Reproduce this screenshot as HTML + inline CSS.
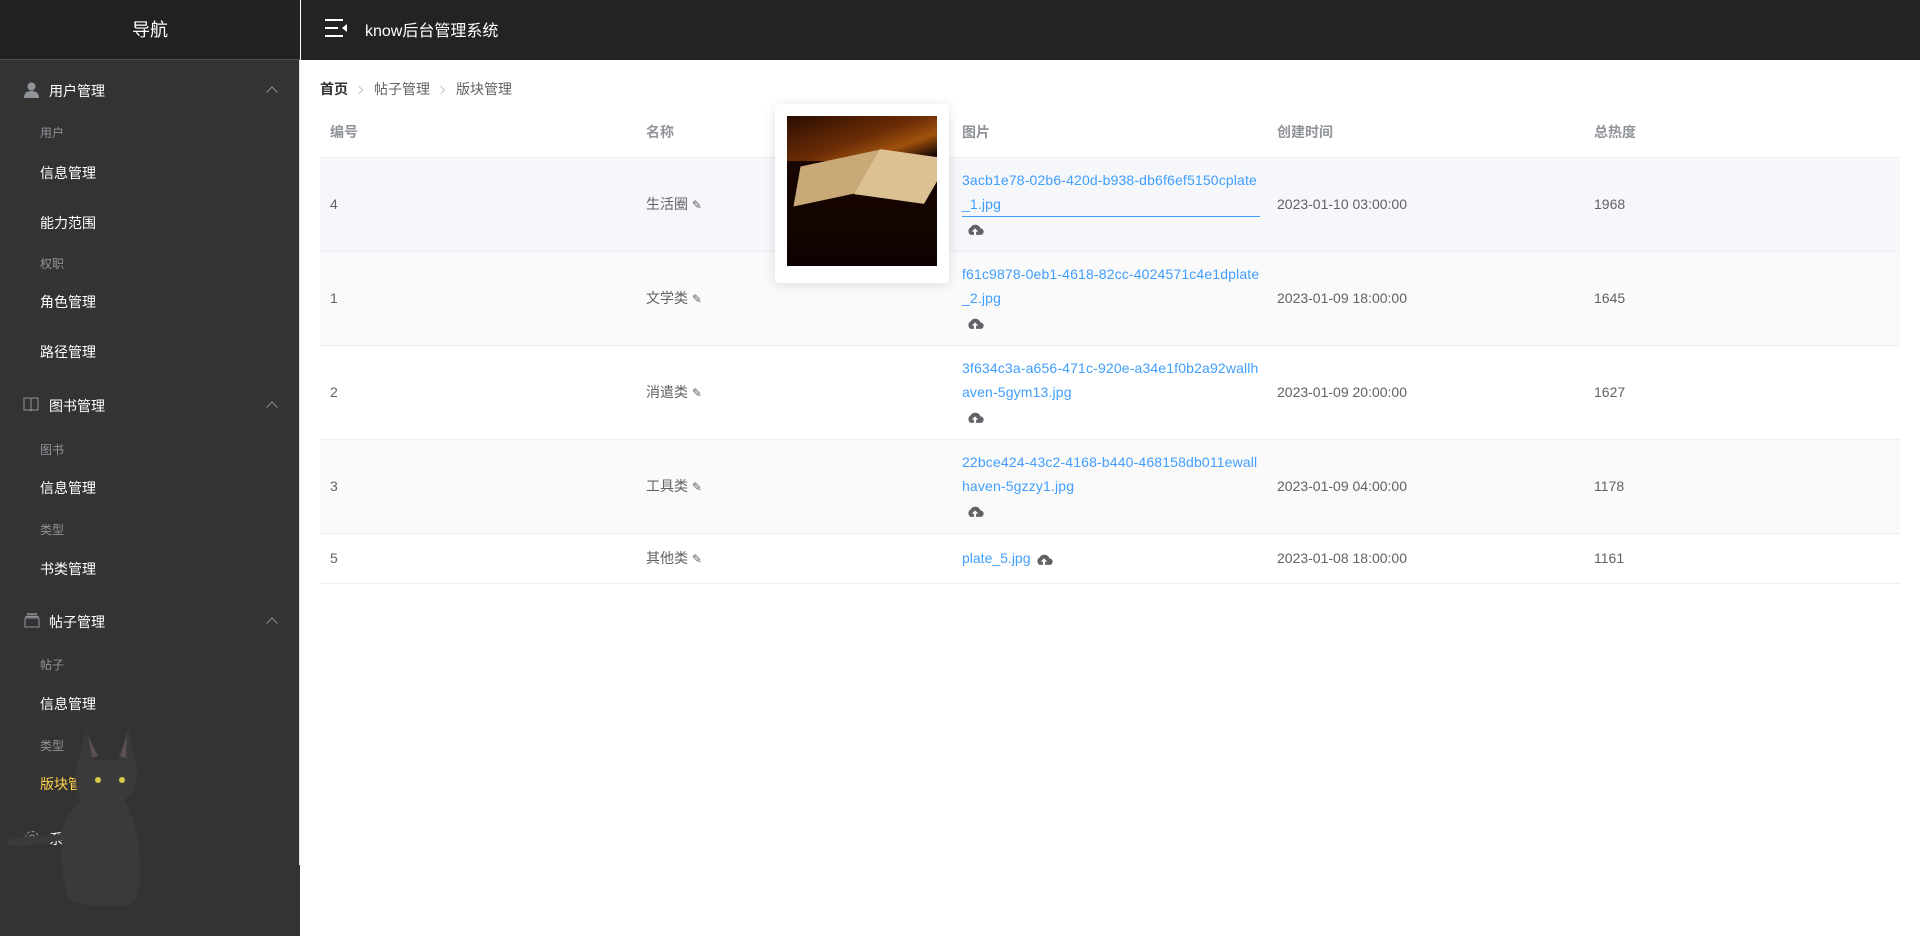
<!DOCTYPE html>
<html><head><meta charset="utf-8"><style>
*{margin:0;padding:0;box-sizing:border-box}
body{width:1920px;height:936px;overflow:hidden;font-family:"Liberation Sans","Noto Sans CJK SC",sans-serif;background:#fff;position:relative}
.side{position:absolute;left:0;top:0;width:300px;height:936px;background:#333}
.side .hd{height:60px;background:#222;color:#fff;font-size:18px;text-align:center;line-height:60px;border-bottom:1px solid #4a4f57}
.side .bd{position:absolute;right:0;top:60px;width:1px;height:805px;background:#e6e6e6}
.it{position:absolute;font-size:14px;color:#fff;white-space:nowrap}
.sm{position:absolute;font-size:12px;color:#909399}
.arr{position:absolute;left:268px;width:8px;height:8px;border-left:1px solid #909399;border-top:1px solid #909399;transform:rotate(45deg)}
.top{position:absolute;left:300px;top:0;width:1620px;height:60px;background:#232323;border-left:1px solid #fff}
.top .t{position:absolute;left:64px;top:17px;color:#fff;font-size:16px}
.crumb{position:absolute;left:320px;top:79px;font-size:14px;color:#606266}
.crumb b{color:#303133}
.crumb i{font-style:normal;display:inline-block;width:6px;height:6px;border-right:1px solid #c0c4cc;border-top:1px solid #c0c4cc;transform:rotate(45deg);vertical-align:middle;margin:0 12px 0 8px}
table{position:absolute;left:320px;top:108px;width:1580px;border-collapse:collapse;font-size:14px;color:#606266}
td,th{text-align:left;padding-left:10px;border-bottom:1px solid #ebeef5;vertical-align:middle}
th{height:49px;color:#909399;font-weight:bold;font-size:14px}
td{height:94px;line-height:24px}
tr.l td{height:50px}
tr.h td{background:#f5f7fa}
tr.s td{background:#fafafa}
a{color:#409eff;text-decoration:none}
td a.w{display:inline-block;width:298px;word-break:break-all;letter-spacing:0.15px}
.c{display:inline-block;width:18px;height:13px;vertical-align:middle;margin-left:4px}
.e{font-size:12px;color:#606266}
.pop{position:absolute;left:775px;top:104px;width:174px;height:179px;background:#fff;border-radius:4px;box-shadow:0 2px 12px rgba(0,0,0,.12)}
.img{position:absolute;left:12px;top:12px;width:150px;height:150px;background:linear-gradient(160deg,#2a0c02 0%,#6e2e06 25%,#a0520e 35%,#1d0a03 45%);overflow:hidden}
</style></head><body>
<div class="side">
<div class="hd">导航</div>
<div class="bd"></div>
<svg style="position:absolute;left:24px;top:82px" width="15" height="16" viewBox="0 0 15 16"><circle cx="7.5" cy="4.5" r="4" fill="#909399"/><path d="M0 16 Q0 9 7.5 9 Q15 9 15 16Z" fill="#909399"/></svg>
<div class="it" style="left:49px;top:81px">用户管理</div><div class="arr" style="top:88px"></div>
<div class="sm" style="left:40px;top:124px">用户</div>
<div class="it" style="left:40px;top:163px">信息管理</div>
<div class="it" style="left:40px;top:213px">能力范围</div>
<div class="sm" style="left:40px;top:255px">权职</div>
<div class="it" style="left:40px;top:292px">角色管理</div>
<div class="it" style="left:40px;top:342px">路径管理</div>
<svg style="position:absolute;left:23px;top:397px" width="16" height="14" viewBox="0 0 16 14"><path d="M1 1h6l1 1 1-1h6v12H9l-1 1-1-1H1z M8 2v11" fill="none" stroke="#909399"/></svg>
<div class="it" style="left:49px;top:396px">图书管理</div><div class="arr" style="top:403px"></div>
<div class="sm" style="left:40px;top:441px">图书</div>
<div class="it" style="left:40px;top:478px">信息管理</div>
<div class="sm" style="left:40px;top:521px">类型</div>
<div class="it" style="left:40px;top:559px">书类管理</div>
<svg style="position:absolute;left:24px;top:613px" width="16" height="15" viewBox="0 0 16 15"><path d="M3 1h10M1.5 3.5h13" stroke="#909399" stroke-width="1.5"/><rect x="1" y="5" width="14" height="9" fill="none" stroke="#909399"/></svg>
<div class="it" style="left:49px;top:612px">帖子管理</div><div class="arr" style="top:619px"></div>
<div class="sm" style="left:40px;top:656px">帖子</div>
<div class="it" style="left:40px;top:694px">信息管理</div>
<div class="sm" style="left:40px;top:737px">类型</div>
<div class="it" style="left:40px;top:774px;color:#ffd04b">版块管理</div>
<svg style="position:absolute;left:24px;top:830px" width="16" height="16" viewBox="0 0 16 16"><circle cx="8" cy="8" r="3" fill="none" stroke="#909399"/><circle cx="8" cy="8" r="6.5" fill="none" stroke="#909399" stroke-dasharray="3 2"/></svg>
<div class="it" style="left:49px;top:829px">系统管理</div>
<svg style="position:absolute;left:0;top:720px" width="150" height="190" viewBox="0 0 150 190">
<path d="M86 10 L92 40 L118 40 L128 8 L136 45 Q140 70 124 80 Q142 110 140 160 Q138 185 125 186 L95 186 Q80 185 70 180 Q60 160 62 120 Q40 125 20 126 Q5 126 8 120 Q20 116 60 115 Q66 95 82 80 Q74 70 76 50Z" fill="#3a3a3a"/>
<path d="M88 16 L92 38 L98 36Z M127 14 L120 36 L126 38Z" fill="#5a5050"/>
<circle cx="98" cy="60" r="3" fill="#d8c84a"/><circle cx="122" cy="60" r="3" fill="#d8c84a"/>
</svg>
</div>
<div class="top">
<svg style="position:absolute;left:23px;top:18px" width="24" height="20" viewBox="0 0 24 20"><path d="M1 2h18M1 10h13M1 18h18" stroke="#fff" stroke-width="2"/><path d="M23 6v8l-5-4z" fill="#fff"/></svg>
<div class="t">know后台管理系统</div>
</div>
<div class="crumb"><b>首页</b><i></i>帖子管理<i></i>版块管理</div>
<table>
<colgroup><col style="width:316px"><col style="width:316px"><col style="width:315px"><col style="width:317px"><col></colgroup>
<tr><th>编号</th><th>名称</th><th>图片</th><th>创建时间</th><th>总热度</th></tr>
<tr class="h"><td>4</td><td>生活圈 <span class="e">✎</span></td><td><a class="w" style="border-bottom:1px solid #409eff">3acb1e78-02b6-420d-b938-db6f6ef5150cplate_1.jpg</a><br><svg class="c" viewBox="0 0 16 12"><path d="M4 11a4 4 0 0 1 0-7 5 5 0 0 1 9 1 3 3 0 0 1 0 6z" fill="#606266"/><path d="M8 5l-3 3h2v3h2V8h2z" fill="#fff"/></svg></td><td>2023-01-10 03:00:00</td><td>1968</td></tr>
<tr class="s"><td>1</td><td>文学类 <span class="e">✎</span></td><td><a class="w">f61c9878-0eb1-4618-82cc-4024571c4e1dplate_2.jpg</a><br><svg class="c" viewBox="0 0 16 12"><path d="M4 11a4 4 0 0 1 0-7 5 5 0 0 1 9 1 3 3 0 0 1 0 6z" fill="#606266"/><path d="M8 5l-3 3h2v3h2V8h2z" fill="#fff"/></svg></td><td>2023-01-09 18:00:00</td><td>1645</td></tr>
<tr><td>2</td><td>消遣类 <span class="e">✎</span></td><td><a class="w">3f634c3a-a656-471c-920e-a34e1f0b2a92wallhaven-5gym13.jpg</a><br><svg class="c" viewBox="0 0 16 12"><path d="M4 11a4 4 0 0 1 0-7 5 5 0 0 1 9 1 3 3 0 0 1 0 6z" fill="#606266"/><path d="M8 5l-3 3h2v3h2V8h2z" fill="#fff"/></svg></td><td>2023-01-09 20:00:00</td><td>1627</td></tr>
<tr class="s"><td>3</td><td>工具类 <span class="e">✎</span></td><td><a class="w">22bce424-43c2-4168-b440-468158db011ewallhaven-5gzzy1.jpg</a><br><svg class="c" viewBox="0 0 16 12"><path d="M4 11a4 4 0 0 1 0-7 5 5 0 0 1 9 1 3 3 0 0 1 0 6z" fill="#606266"/><path d="M8 5l-3 3h2v3h2V8h2z" fill="#fff"/></svg></td><td>2023-01-09 04:00:00</td><td>1178</td></tr>
<tr class="l"><td>5</td><td>其他类 <span class="e">✎</span></td><td><a>plate_5.jpg</a><svg class="c" viewBox="0 0 16 12"><path d="M4 11a4 4 0 0 1 0-7 5 5 0 0 1 9 1 3 3 0 0 1 0 6z" fill="#606266"/><path d="M8 5l-3 3h2v3h2V8h2z" fill="#fff"/></svg></td><td>2023-01-08 18:00:00</td><td>1161</td></tr>
</table>
<div class="pop"><div class="img">
<div style="position:absolute;left:0;top:45px;width:150px;height:110px;background:linear-gradient(180deg,#1a0602,#0c0200)"></div>
<div style="position:absolute;left:10px;top:42px;width:80px;height:40px;background:#c9a978;transform:skew(-10deg,-12deg)"></div>
<div style="position:absolute;left:80px;top:38px;width:70px;height:45px;background:#dcc193;transform:skew(-30deg,8deg)"></div>
</div></div>
</body></html>
